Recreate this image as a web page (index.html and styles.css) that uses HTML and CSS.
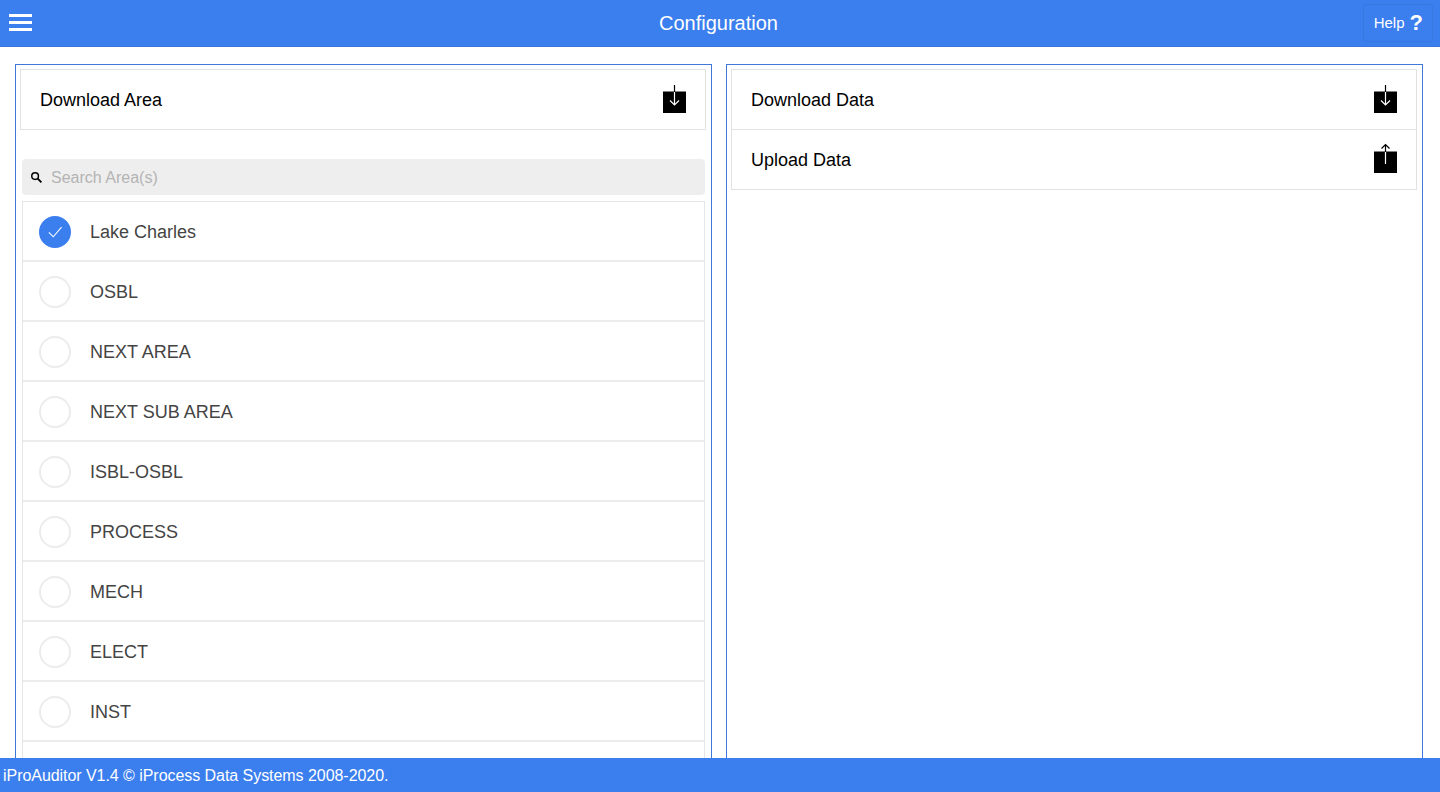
FILE: index.html
```html
<!DOCTYPE html>
<html lang="en">
<head>
<meta charset="utf-8">
<title>Configuration</title>
<link rel="stylesheet" href="styles.css">
</head>
<body>
<header class="topbar">
  <button class="menu-btn" aria-label="Menu"><span></span><span></span><span></span></button>
  <h1 class="title">Configuration</h1>
  <button class="help-btn">Help <span class="help-mark">?</span></button>
</header>
<main class="content">
  <section class="panel">
    <div class="action-card">
      <div class="action-row">
        <span class="action-label">Download Area</span>
        <svg class="action-icon" viewBox="0 0 24 30"><rect x="0" y="6.5" width="23" height="21.5" fill="#000"/><path d="M11.5 0V7" stroke="#000" stroke-width="1.2" fill="none"/><path d="M11.5 7V20M7 15.5l4.5 4.5 4.5-4.5" stroke="#fff" stroke-width="1.2" fill="none"/></svg>
      </div>
    </div>
    <div class="search">
      <svg class="search-icon" viewBox="0 0 14 14"><circle cx="5.5" cy="5.5" r="3.6" fill="none" stroke="#000" stroke-width="1.6"/><path d="M8.3 8.3l4 4" stroke="#000" stroke-width="2"/></svg>
      <input class="search-input" type="text" placeholder="Search Area(s)">
    </div>
    <ul class="area-list">
      <li class="area-row"><span class="radio checked"><svg viewBox="0 0 32 32"><path d="M9 16.5l5 5 9.5-11" fill="none" stroke="#fff" stroke-width="1.2"/></svg></span>Lake Charles</li>
      <li class="area-row"><span class="radio"></span>OSBL</li>
      <li class="area-row"><span class="radio"></span>NEXT AREA</li>
      <li class="area-row"><span class="radio"></span>NEXT SUB AREA</li>
      <li class="area-row"><span class="radio"></span>ISBL-OSBL</li>
      <li class="area-row"><span class="radio"></span>PROCESS</li>
      <li class="area-row"><span class="radio"></span>MECH</li>
      <li class="area-row"><span class="radio"></span>ELECT</li>
      <li class="area-row"><span class="radio"></span>INST</li>
      <li class="area-row"></li>
    </ul>
  </section>
  <section class="panel panel-right">
    <div class="action-card">
      <div class="action-row">
        <span class="action-label">Download Data</span>
        <svg class="action-icon" viewBox="0 0 24 30"><rect x="0" y="6.5" width="23" height="21.5" fill="#000"/><path d="M11.5 0V7" stroke="#000" stroke-width="1.2" fill="none"/><path d="M11.5 7V20M7 15.5l4.5 4.5 4.5-4.5" stroke="#fff" stroke-width="1.2" fill="none"/></svg>
      </div>
      <div class="action-row">
        <span class="action-label">Upload Data</span>
        <svg class="action-icon" viewBox="0 0 24 30"><rect x="0" y="6.5" width="23" height="21.5" fill="#000"/><path d="M11.5 7V0M7.5 3.5l4-4 4 4" stroke="#000" stroke-width="1.2" fill="none"/><path d="M11.5 7V19" stroke="#fff" stroke-width="1.2" fill="none"/></svg>
      </div>
    </div>
  </section>
</main>
<footer class="footer">iProAuditor V1.4 © iProcess Data Systems 2008-2020.</footer>
</body>
</html>
```
FILE: styles.css
```css
* { box-sizing: border-box; }
html, body { margin: 0; height: 100%; }
body {
  display: flex;
  flex-direction: column;
  height: 792px;
  overflow: hidden;
  background: #fff;
  font-family: "Liberation Sans", Arial, sans-serif;
  color: #000;
}
.topbar {
  flex: 0 0 47px;
  display: flex;
  align-items: center;
  justify-content: space-between;
  padding: 0 7px 1px 9px;
  background: #3b7eee;
  border-bottom: 1px solid #3a74d8;
  color: #fff;
  position: relative;
}
.menu-btn {
  display: flex;
  flex-direction: column;
  gap: 4.5px;
  width: 24px;
  padding: 0;
  border: 0;
  background: none;
}
.menu-btn span { display: block; height: 2.5px; background: #fff; width: 23px; }
.title {
  position: absolute;
  left: 0;
  right: 0;
  top: 12px;
  margin: 0;
  text-align: center;
  font-size: 20px;
  font-weight: 400;
  line-height: 22px;
  pointer-events: none;
  padding-right: 3px;
}
.help-btn {
  display: flex;
  align-items: center;
  gap: 5px;
  height: 38px;
  padding: 0 9px 0 10px;
  background: #3b7eee;
  border: 1px solid #3876e0;
  border-radius: 3px;
  color: #fff;
  font: 15px "Liberation Sans", Arial, sans-serif;
}
.help-mark { font-size: 22px; font-weight: 700; line-height: 22px; }
.content {
  flex: 1;
  min-height: 0;
  display: flex;
  gap: 14px;
  padding: 17px 17px 0 15px;
  overflow: hidden;
}
.panel {
  flex: 1 1 0;
  min-width: 0;
  border: 1px solid #3f78d8;
  border-bottom: 0;
  padding: 4px 5px 0 4px;
  overflow: hidden;
}
.action-card { border: 1px solid #e2e2e2; border-bottom: 0; }
.action-row {
  height: 60px;
  display: flex;
  align-items: center;
  justify-content: space-between;
  padding: 0 18px 0 19px;
  border-bottom: 1px solid #e2e2e2;
  font-size: 18px;
}
.action-label { padding-top: 2px; }
.action-icon { width: 24px; height: 30px; overflow: visible; display: block; }
.search {
  display: flex;
  align-items: center;
  height: 36px;
  margin: 29px 1px 6px 2px;
  padding: 0 0 0 8px;
  background: #eeeeee;
  border-radius: 4px;
  gap: 8px;
}
.search-icon { width: 13px; height: 13px; flex: none; }
.search-input {
  flex: 1;
  border: 0;
  outline: 0;
  background: none;
  padding: 2px 0 0;
  font: 16px "Liberation Sans", Arial, sans-serif;
}
.search-input::placeholder { color: #b4b4b4; opacity: 1; }
.area-list {
  list-style: none;
  margin: 0 1px 0 2px;
  padding: 0;
  border: 1px solid #e6e6e6;
  border-bottom: 0;
}
.area-row {
  height: 60px;
  display: flex;
  align-items: center;
  gap: 19px;
  padding: 2px 0 0 16px;
  border-bottom: 2px solid #ececec;
  font-size: 18px;
  color: #444;
}
.radio {
  width: 32px;
  height: 32px;
  flex: none;
  border-radius: 50%;
  border: 2px solid #ececec;
}
.radio.checked { background: #3b7eee; border-color: #3b7eee; }
.radio svg { display: block; width: 28px; height: 28px; }
.footer {
  flex: 0 0 34px;
  display: flex;
  align-items: center;
  padding: 2px 0 0 3px;
  background: #3b7eee;
  color: #fff;
  font-size: 16px;
  letter-spacing: -0.05px;
}
```
